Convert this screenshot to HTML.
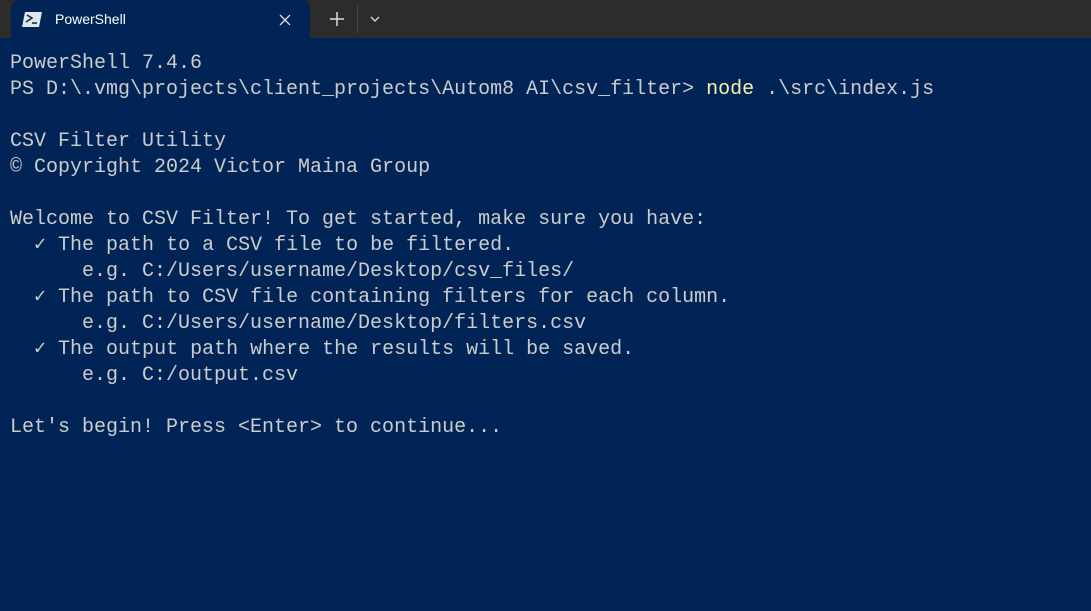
<!DOCTYPE html>
<html><head><style>
body{margin:0;width:1091px;height:611px;background:#012456;overflow:hidden;font-family:"Liberation Mono",monospace;}
.bar{position:absolute;left:0;top:0;width:1091px;height:38px;background:#2c2c2c;}
.tab{position:absolute;left:11px;top:0;width:299px;height:38px;background:#012456;border-radius:8px 8px 0 0;}
.tab .t{position:absolute;left:44px;top:11px;font:14px "Liberation Sans",sans-serif;color:#fff;}
pre{position:absolute;left:10px;top:51px;margin:0;font-size:20px;line-height:26px;color:#cccccc;font-family:"Liberation Mono",monospace;}
.y{color:#f9f1a5}
</style></head><body>
<div class="bar">
<div class="tab">
<svg style="position:absolute;left:11px;top:12px" width="20" height="15" viewBox="0 0 20 15"><path d="M3 0h17l-3 15H0z" fill="#dfe6ee"/><path d="M5 3l5 3-6 4" stroke="#1c2c44" stroke-width="1.6" fill="none"/><path d="M10 11h5" stroke="#1c2c44" stroke-width="1.6"/></svg>
<div class="t">PowerShell</div>
<svg style="position:absolute;left:268px;top:14px" width="12" height="12"><path d="M1 1L11 11M11 1L1 11" stroke="#ddd" stroke-width="1.3"/></svg>
</div>
<svg style="position:absolute;left:330px;top:12px" width="14" height="14"><path d="M7 0v14M0 7h14" stroke="#ddd" stroke-width="1.5"/></svg>
<div style="position:absolute;left:357px;top:5px;width:1px;height:28px;background:#444"></div>
<svg style="position:absolute;left:370px;top:16px" width="10" height="6"><path d="M1 1l4 4 4-4" stroke="#ddd" stroke-width="1.3" fill="none"/></svg>
</div>
<pre>PowerShell 7.4.6
PS D:\.vmg\projects\client_projects\Autom8 AI\csv_filter&gt; <span class="y">node</span> .\src\index.js

CSV Filter Utility
© Copyright 2024 Victor Maina Group

Welcome to CSV Filter! To get started, make sure you have:
  ✓ The path to a CSV file to be filtered.
      e.g. C:/Users/username/Desktop/csv_files/
  ✓ The path to CSV file containing filters for each column.
      e.g. C:/Users/username/Desktop/filters.csv
  ✓ The output path where the results will be saved.
      e.g. C:/output.csv

Let's begin! Press &lt;Enter&gt; to continue...</pre>
</body></html>
